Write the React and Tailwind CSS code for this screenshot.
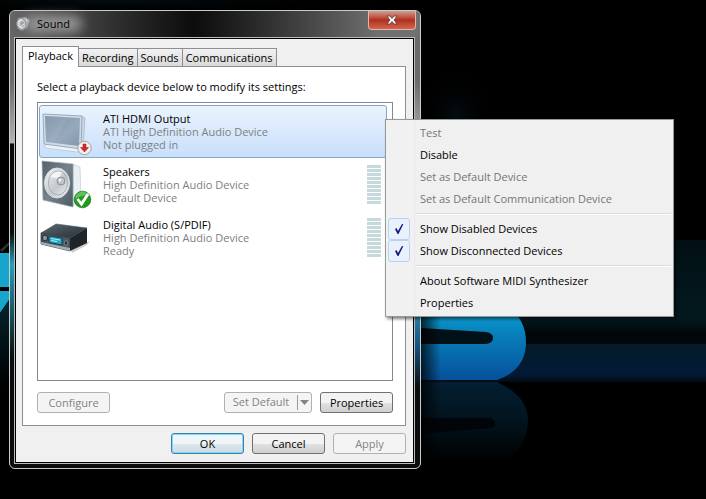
import { useState } from 'react';

const tabs = ['Playback', 'Recording', 'Sounds', 'Communications'];

const devices = [
  { id: 'hdmi', name: 'ATI HDMI Output', driver: 'ATI High Definition Audio Device', status: 'Not plugged in', icon: MonitorIcon, meter: false },
  { id: 'speakers', name: 'Speakers', driver: 'High Definition Audio Device', status: 'Default Device', icon: SpeakerIcon, meter: true },
  { id: 'spdif', name: 'Digital Audio (S/PDIF)', driver: 'High Definition Audio Device', status: 'Ready', icon: ReceiverIcon, meter: true },
];

const menuGroups = [
  [
    { label: 'Test', disabled: true },
    { label: 'Disable' },
    { label: 'Set as Default Device', disabled: true },
    { label: 'Set as Default Communication Device', disabled: true },
  ],
  [
    { label: 'Show Disabled Devices', checkable: true },
    { label: 'Show Disconnected Devices', checkable: true },
  ],
  [{ label: 'About Software MIDI Synthesizer' }, { label: 'Properties' }],
];

function Wallpaper() {
  return (
    <svg className="absolute inset-0 h-full w-full" viewBox="0 0 706 499" preserveAspectRatio="xMinYMin slice" aria-hidden="true">
      <defs>
        <linearGradient id="letter" x1="0" y1="0" x2="0" y2="1">
          <stop offset="0" stopColor="#12a5d8" />
          <stop offset="0.35" stopColor="#0787c0" />
          <stop offset="1" stopColor="#07509b" />
        </linearGradient>
        <linearGradient id="mirror" x1="0" y1="0" x2="0" y2="1">
          <stop offset="0" stopColor="#031f33" />
          <stop offset="0.5" stopColor="#02131c" />
          <stop offset="1" stopColor="#000" />
        </linearGradient>
        <linearGradient id="upper" x1="0" y1="0" x2="0" y2="1">
          <stop offset="0" stopColor="#021014" />
          <stop offset="0.75" stopColor="#03191f" />
          <stop offset="0.9" stopColor="#01070a" />
          <stop offset="1" stopColor="#01070a" />
        </linearGradient>
        <linearGradient id="lower" x1="0" y1="0" x2="0" y2="1">
          <stop offset="0" stopColor="#031b2a" />
          <stop offset="0.8" stopColor="#021a34" />
          <stop offset="1" stopColor="#010a14" />
        </linearGradient>
        <linearGradient id="shade" x1="0" y1="0" x2="1" y2="0">
          <stop offset="0" stopColor="#000" stopOpacity="0.75" />
          <stop offset="1" stopColor="#000" stopOpacity="0" />
        </linearGradient>
        <linearGradient id="leftFade" x1="0" y1="0" x2="0" y2="1">
          <stop offset="0" stopColor="#04252f" />
          <stop offset="1" stopColor="#000" />
        </linearGradient>
        <radialGradient id="haze">
          <stop offset="0" stopColor="#030e13" />
          <stop offset="1" stopColor="#000" stopOpacity="0" />
        </radialGradient>
      </defs>
      <rect width="706" height="499" fill="#000" />
      <ellipse cx="120" cy="0" rx="260" ry="14" fill="url(#haze)" />
      <ellipse cx="456" cy="116" rx="34" ry="44" fill="url(#haze)" />
      <rect x="421" y="240" width="285" height="104" fill="url(#upper)" />
      <rect x="421" y="344" width="285" height="38" fill="url(#lower)" />
      <path d="M400 300H500Q526 316 526 342Q526 370 497 380H400Z" fill="url(#letter)" />
      <path d="M421 328L486 332Q493 333 493 338T486 344H421Z" fill="#021017" />
      <path d="M400 382H497Q528 396 528 420Q528 446 505 462H400Z" fill="url(#mirror)" />
      <path d="M421 418H491Q495 420 495 424T490 428L421 434Z" fill="#010509" />
      <rect x="421" y="317" width="20" height="145" fill="url(#shade)" />
      <path d="M0 253H9V287H0ZM0 291H9V300L0 313Z" fill="#17a5cd" />
      <path d="M0 250L9 242V245L2 252Z" fill="#263538" />
      <path d="M0 313L9 300V385H0Z" fill="url(#leftFade)" />
    </svg>
  );
}

function SoundIcon() {
  return (
    <svg width="16" height="16" viewBox="0 0 16 16" aria-hidden="true">
      <path d="M3 2L10 1L14 3L15 5L12 12L7 15L3 13L1 8Z" fill="#bfc5c8" stroke="#62686b" strokeWidth="0.7" />
      <ellipse cx="6.5" cy="8" rx="4.5" ry="5.5" fill="#dfe3e5" stroke="#858d91" transform="rotate(-15 6.5 8)" />
      <ellipse cx="7" cy="8" rx="2.2" ry="3" fill="#a4adb2" />
      <path d="M3 6L7 3M5 11L9 8M11 3L12 6" stroke="#fff" />
    </svg>
  );
}

function MonitorIcon() {
  return (
    <svg width="52" height="51" viewBox="0 0 52 51" aria-hidden="true">
      <defs>
        <linearGradient id="screen" x1="0" y1="0" x2="1" y2="1">
          <stop offset="0" stopColor="#7c90a6" />
          <stop offset="0.6" stopColor="#97a9bc" />
          <stop offset="1" stopColor="#8497ab" />
        </linearGradient>
      </defs>
      <path d="M4 40L10 36L40 41L44 45L37 46L5 42Z" fill="#eaf2f9" stroke="#b4c3d1" strokeWidth="0.7" />
      <path d="M41 10L45 12L43 42L40 43Z" fill="#cad8e5" stroke="#9babbb" strokeWidth="0.6" />
      <path d="M3 8L42 10L41 43L4 38Z" fill="#cfdce8" stroke="#8b9cae" strokeWidth="0.8" />
      <path d="M5 10L40 12L39 40L6 36Z" fill="url(#screen)" />
      <path d="M5 10L28 11.300L14 37L6 36Z" fill="#fff" opacity="0.08" />
      <circle cx="44.500" cy="42" r="6.700" fill="#f3efee" stroke="#a3a3a3" />
      <path d="M43 38H46V41.500H48.500L44.500 46L40.500 41.500H43Z" fill="#cf2a28" stroke="#9c1c1c" strokeWidth="0.5" />
    </svg>
  );
}

function SpeakerIcon() {
  return (
    <svg width="52" height="51" viewBox="0 0 52 51" aria-hidden="true">
      <defs>
        <linearGradient id="cone" x1="0" y1="0" x2="1" y2="1">
          <stop offset="0" stopColor="#f4f6f7" />
          <stop offset="0.55" stopColor="#c3c9cd" />
          <stop offset="1" stopColor="#f0f2f3" />
        </linearGradient>
        <linearGradient id="panel" x1="0" y1="0" x2="1" y2="1">
          <stop offset="0" stopColor="#53616b" />
          <stop offset="0.5" stopColor="#75838c" />
          <stop offset="1" stopColor="#4b5963" />
        </linearGradient>
      </defs>
      <path d="M33 5L40 8L41 39L33 47Z" fill="#e9eff3" stroke="#c3cdd4" strokeWidth="0.7" />
      <path d="M2 2L33 5L33 48L3 41Z" fill="url(#panel)" stroke="#9aa6ae" strokeWidth="0.7" />
      <ellipse cx="17" cy="24" rx="12.500" ry="15" fill="url(#cone)" stroke="#dde1e3" />
      <ellipse cx="18" cy="24" rx="9.500" ry="12" fill="none" stroke="#9ba4aa" strokeWidth="0.8" />
      <path d="M10 18Q15 11 22 13L19 20Z" fill="#fff" opacity="0.7" />
      <circle cx="21" cy="22" r="4" fill="#bdc4c8" stroke="#7d878d" strokeWidth="0.8" />
      <circle cx="20" cy="21" r="1.500" fill="#f5f6f7" />
      <circle cx="42.500" cy="40.500" r="8.300" fill="#25991f" stroke="#187113" strokeWidth="0.7" />
      <path d="M35.500 37Q42.500 28 49.500 37Q43 35 35.500 40Z" fill="#8ed887" opacity="0.6" />
      <path d="M37.500 40L41.500 45L48 35" fill="none" stroke="#fff" strokeWidth="2.800" />
    </svg>
  );
}

function ReceiverIcon() {
  return (
    <svg width="52" height="51" viewBox="0 0 52 51" aria-hidden="true">
      <defs>
        <linearGradient id="lid" x1="0" y1="0" x2="1" y2="1">
          <stop offset="0" stopColor="#5d6872" />
          <stop offset="1" stopColor="#252c33" />
        </linearGradient>
      </defs>
      <path d="M31 38L50 29L47 33L32 41Z" fill="#aaa" opacity="0.6" />
      <path d="M1 21L16 12L47 16L30 26Z" fill="url(#lid)" stroke="#4d5963" strokeWidth="0.6" />
      <path d="M30 26L47 16V31L30 39Z" fill="#1d242a" />
      <path d="M1 21L30 26V39L1 32Z" fill="#4c5862" stroke="#2a3238" strokeWidth="0.7" />
      <path d="M1 30L30 36V39L1 32Z" fill="#a3adb4" />
      <path d="M9 24L22 26V33L9 30.500Z" fill="#2aa7c4" stroke="#102f3b" strokeWidth="0.8" />
      <path d="M11 26.500L20 28M11 28.500L17 29.500" stroke="#a5f1ff" />
      <ellipse cx="5" cy="26" rx="2.500" ry="3" fill="#8a959d" stroke="#1e262c" />
      <ellipse cx="26" cy="31" rx="1.800" ry="2.300" fill="#2a333a" stroke="#a1abb2" strokeWidth="0.6" />
    </svg>
  );
}

function LevelMeter() {
  return (
    <div className="flex w-[14px] flex-col gap-px">
      {Array.from({ length: 10 }, (_, i) => (
        <span key={i} className="h-[3px] bg-[#c5dadd]" />
      ))}
    </div>
  );
}

function DeviceRow({ device, selected, onSelect }) {
  const Icon = device.icon;
  return (
    <li>
      <button
        type="button"
        onClick={onSelect}
        className={`flex h-[53px] w-full items-center rounded-[3px] border pr-[5px] text-left ${
          selected ? 'border-[#87a4c9] bg-linear-to-b from-[#eaf3fd] to-[#c8dffb]' : 'border-transparent'
        }`}
      >
        <span className="flex w-[63px] shrink-0">
          <Icon />
        </span>
        <span className="flex flex-1 flex-col text-[11px] leading-[13px] text-[#808080]">
          <span className="text-black">{device.name}</span>
          <span>{device.driver}</span>
          <span>{device.status}</span>
        </span>
        {device.meter && <LevelMeter />}
      </button>
    </li>
  );
}

function PushButton({ children, disabled = false, primary = false }) {
  let look = 'border-[#707070] bg-linear-to-b from-[#f3f3f3] from-50% via-[#e2e2e2] via-50% to-[#cfcfcf] text-black';
  if (disabled) look = 'border-[#adb2b5] bg-[#f4f4f4] text-[#838383]';
  if (primary) look = 'border-[#3c7fb1] bg-linear-to-b from-[#eef6f9] from-50% via-[#dde7eb] via-50% to-[#cbdce2] text-black shadow-[inset_0_0_0_1px_#7fd9f3]';
  return (
    <button type="button" disabled={disabled} className={`h-[21px] w-[73px] rounded-[3px] border text-[11px] leading-[19px] ${look}`}>
      {children}
    </button>
  );
}

function ContextMenu() {
  const [checked, setChecked] = useState({ 'Show Disabled Devices': true, 'Show Disconnected Devices': true });

  return (
    <div
      role="menu"
      className="absolute top-[119px] left-[385px] w-[289px] border border-[#979797] bg-[#f0f0f0] bg-linear-to-r from-[#f1f1f1] from-[28px] via-[#e2e3e3] via-[28px] to-[#f0f0f0] to-[29px] p-[2px] text-[11px] shadow-[2px_2px_3px_rgba(0,0,0,0.5)]"
    >
      {menuGroups.map((group, i) => (
        <div key={i} role="group" className={i > 0 ? 'relative pt-2' : ''}>
          {i > 0 && <hr className="absolute top-[3px] right-0 left-[28px] border-t border-[#dcdcdc] shadow-[0_1px_0_#fff]" />}
          {group.map((item) => (
            <button
              key={item.label}
              type="button"
              role={item.checkable ? 'menuitemcheckbox' : 'menuitem'}
              aria-checked={item.checkable ? checked[item.label] : undefined}
              disabled={item.disabled}
              onClick={() => item.checkable && setChecked({ ...checked, [item.label]: !checked[item.label] })}
              className="flex h-[22px] w-full items-center text-left text-black disabled:text-[#757575]"
            >
              <span className="flex w-8 shrink-0">
                {checked[item.label] && (
                  <span className="flex size-[22px] items-center justify-center rounded-[3px] border border-[#b3d3f9] bg-[#eaf1fb]">
                    <svg width="10" height="12" viewBox="0 0 10 12" aria-hidden="true">
                      <path d="M1 6L2.500 5L4 8L8 1L9.300 1.300L4.500 11H3.500Z" fill="#101d85" />
                    </svg>
                  </span>
                )}
              </span>
              {item.label}
            </button>
          ))}
        </div>
      ))}
    </div>
  );
}

export default function App() {
  const [activeTab, setActiveTab] = useState('Playback');
  const [selected, setSelected] = useState('hdmi');

  return (
    <div className="relative min-h-screen overflow-hidden bg-black px-[9px] pt-[10px] font-['Open_Sans','Noto_Sans',sans-serif]">
      <Wallpaper />

      <section
        aria-label="Sound"
        className="relative w-full max-w-[412px] rounded-[6px] border border-[#c9cccd] bg-linear-to-b from-[#6b6b6b] from-[70px] via-[#b4b4b4] via-[132px] to-[#0c0c0c] to-[133px] pr-[5px] pb-[4px] pl-[4px]"
      >
        {/* Glass colour picked up from the wallpaper */}
        <div className="absolute top-[222px] bottom-[110px] left-0 w-[4px] bg-linear-to-b from-transparent via-[#269fb8] via-25% to-transparent" />
        <div className="absolute top-[296px] right-0 bottom-[80px] w-[5px] bg-linear-to-b from-[#318dac] via-[#14507c] to-transparent" />

        <header className="relative -mr-[5px] -ml-[4px] flex h-[26px] items-center rounded-t-[5px] bg-linear-to-r from-[#666] via-[#0c0c0c] via-45% to-[#707070] to-90% pl-[5px] text-[11px]">
          <SoundIcon />
          <h1 className="relative ml-[6px] text-black">
            <span className="absolute -inset-x-3 inset-y-0 rounded-full bg-[#999] blur-[6px]" />
            <span className="relative">Sound</span>
          </h1>
          <button
            type="button"
            aria-label="Close"
            className="mr-[4px] ml-auto flex h-[19px] w-[48px] items-center justify-center self-start rounded-b-[4px] border border-t-0 border-[#e2b6ae] bg-linear-to-b from-[#d39a8f] from-0% via-[#b12f1b] via-50% to-[#d1644c]"
          >
            <svg width="12" height="10" viewBox="0 0 12 10" aria-hidden="true">
              <path d="M1 1H4L6 3.500L8 1H11L8 5L11 9H8L6 6.500L4 9H1L4 5Z" fill="#fff" stroke="#5b3a3a" strokeWidth="0.8" />
            </svg>
          </button>
        </header>

        <div className="relative border border-[#b9bcbd] bg-black p-px">
          <div className="bg-[#f0f0f0] pt-[7px] pr-[7px] pb-[8px] pl-[6px]">
            <div role="tablist" className="relative flex items-end text-[11px]">
              {tabs.map((tab) => (
                <button
                  key={tab}
                  type="button"
                  role="tab"
                  aria-selected={activeTab === tab}
                  onClick={() => setActiveTab(tab)}
                  className={
                    activeTab === tab
                      ? '-mb-px h-[21px] border border-b-0 border-[#8c8e94] bg-white px-[5px] pb-[2px]'
                      : 'h-[18px] border border-b-0 border-l-0 border-[#8c8e94] bg-linear-to-b from-[#f2f2f2] to-[#d9d9d9] px-[3px] leading-[17px]'
                  }
                >
                  {tab}
                </button>
              ))}
            </div>

            <div role="tabpanel" className="border border-[#8c8e94] bg-white pt-[12px] pr-[12px] pb-[12px] pl-[14px]">
              <p className="text-[11px] leading-[15px] text-black">Select a playback device below to modify its settings:</p>
              <ul className="mt-[8px] min-h-[279px] border border-[#828790] bg-white pt-[2px] pr-[5px] pl-px">
                {devices.map((device) => (
                  <DeviceRow key={device.id} device={device} selected={device.id === selected} onSelect={() => setSelected(device.id)} />
                ))}
              </ul>
              <div className="mt-[11px] flex items-center">
                <PushButton disabled>Configure</PushButton>
                <button
                  type="button"
                  disabled
                  className="mr-[8px] ml-auto flex h-[21px] w-[88px] items-center rounded-[3px] border border-[#adb2b5] bg-[#f4f4f4] text-[11px] text-[#838383]"
                >
                  <span className="flex-1">Set Default</span>
                  <span className="flex h-[15px] w-[14px] items-center justify-center border-l border-[#9a9a9a]">
                    <svg width="9" height="5" viewBox="0 0 9 5" aria-hidden="true">
                      <path d="M0 0H9L4.500 5Z" fill="#838383" />
                    </svg>
                  </span>
                </button>
                <PushButton>Properties</PushButton>
              </div>
            </div>

            <div className="mt-[7px] flex justify-end gap-[8px]">
              <PushButton primary>OK</PushButton>
              <PushButton>Cancel</PushButton>
              <PushButton disabled>Apply</PushButton>
            </div>
          </div>
        </div>
      </section>

      <ContextMenu />
    </div>
  );
}
